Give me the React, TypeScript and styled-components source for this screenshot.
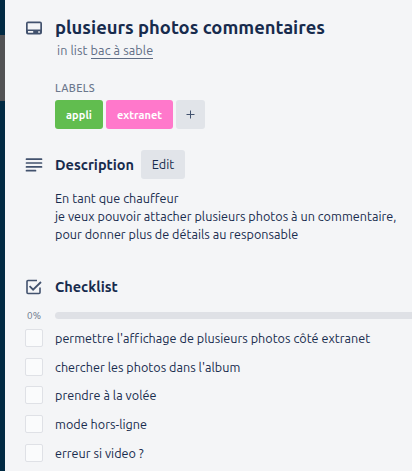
import React from 'react';
import styled, { createGlobalStyle } from 'styled-components';

const GlobalStyle = createGlobalStyle`
  * { box-sizing: border-box; }
  body {
    margin: 0;
    overflow: hidden;
    background: #f4f5f7;
    color: #172b4d;
    font-family: Ubuntu, "Noto Sans", "Open Sans", sans-serif;
    font-size: 12.6px;
  }
`;

const Page = styled.div`
  display: flex;
  width: 412px;
  height: 471px;
  overflow: hidden;
`;

const Backdrop = styled.div`
  flex: 0 0 5px;
  padding-top: 35px;
  background: #012a43;
`;

const BackdropList = styled.div`
  height: 66px;
  background: #525254;
`;

const Card = styled.main`
  flex: 1;
  min-width: 0;
  padding-left: 20px;
  background: #f4f5f7;
`;

const Row = styled.div<{ $height: number; $top?: number }>`
  display: flex;
  align-items: center;
  height: ${p => p.$height}px;
  margin-top: ${p => p.$top ?? 0}px;
`;

const Gutter = styled.div`
  display: flex;
  flex: 0 0 30px;
  color: #42526e;
  svg { display: block; }
`;

const Text = styled.span<{ $track?: number }>`
  white-space: nowrap;
  letter-spacing: ${p => p.$track ?? 0}px;
`;

const Title = styled.h1`
  margin: 0;
  padding-bottom: 2px;
  font-size: 18.4px;
  line-height: 24px;
  font-weight: 700;
`;

const Subtitle = styled.div`
  margin-left: 32px;
  height: 18px;
  color: #5e6c84;
  line-height: 18px;
`;

const ListLink = styled.a`
  display: inline-block;
  height: 18px;
  border-bottom: 1px solid #5e6c84;
`;

const LabelsHeading = styled.h3`
  margin: 20px 0 0 30px;
  height: 21px;
  color: #6b778c;
  font-size: 10.8px;
  font-weight: 500;
  line-height: 18px;
`;

const Labels = styled.div`
  display: flex;
  gap: 3px;
  margin: 0 0 0 30px;
`;

const Label = styled.div<{ $color: string; $width: number }>`
  display: flex;
  align-items: center;
  justify-content: center;
  width: ${p => p.$width}px;
  height: 29px;
  border-radius: 3px;
  background: ${p => p.$color};
  color: #fff;
  font-size: 11px;
  font-weight: 700;
`;

const Heading = styled.h2`
  margin: 0;
  font-size: 14.5px;
  line-height: 20px;
  font-weight: 700;
`;

const EditButton = styled.button`
  width: 44px;
  height: 29px;
  margin-left: auto;
  padding: 0 0 1px;
  border: 0;
  border-radius: 3px;
  background: #e1e4e9;
  color: #172b4d;
  font: inherit;
`;

const HeadingGroup = styled.div`
  display: flex;
  align-items: center;
  width: 130px;
`;

const Description = styled.div`
  display: flex;
  flex-direction: column;
  margin: 10px 0 0 30px;
  line-height: 18px;
`;

const Percent = styled.span`
  width: 18px;
  color: #6b778c;
  font-size: 9.9px;
  text-align: center;
`;

const Progress = styled.div`
  flex: 1;
  height: 7px;
  border-radius: 4px 0 0 4px;
  background: #dfe1e6;
`;

const Items = styled.div`
  display: flex;
  flex-direction: column;
  gap: 10.7px;
  margin-top: 10px;
`;

const Item = styled.label`
  display: flex;
  align-items: center;
  height: 18px;
`;

const Box = styled.span`
  width: 18px;
  height: 18px;
  margin-right: 12px;
  border: 1px solid #dfe1e6;
  border-radius: 2px;
  background: #fafbfc;
`;

const CardIcon = () => (
  <svg width="18" height="14" viewBox="0 0 18 14">
    <path
      fill="#42526e"
      fillRule="evenodd"
      d="M3 0.5h12a2 2 0 0 1 2 2v9a2 2 0 0 1-2 2H3a2 2 0 0 1-2-2v-9a2 2 0 0 1 2-2ZM2.7 2.2v6.2h12.6V2.2ZM3 10.1v1.7h5.2v-1.7ZM13.2 10.2v1.5h1.7v-1.5Z"
    />
  </svg>
);

const LinesIcon = () => (
  <svg width="18" height="14" viewBox="0 0 18 14" stroke="#42526e" strokeWidth="1.7" strokeLinecap="round">
    <path d="M1.5 1.2h15M1.5 5h15M1.5 8.9h15M1.5 12.7h9" />
  </svg>
);

const CheckIcon = () => (
  <svg width="18" height="16" viewBox="0 0 18 16" fill="none" stroke="#42526e" strokeWidth="1.6">
    <path d="M12 1.5H3A1 1 0 0 0 2 2.500V13.500a1 1 0 0 0 1 1h11a1 1 0 0 0 1-1V8.500" />
    <path d="M4.600 7.200l3.500 3.500L16 3" strokeWidth="1.8" />
  </svg>
);

const PlusIcon = () => (
  <svg width="9" height="9" viewBox="0 0 9 9" stroke="#42526e">
    <path d="M4.5 0.5v8M0.5 4.5h8" />
  </svg>
);

const description = [
  'En tant que chauffeur',
  'je veux pouvoir attacher plusieurs photos à un commentaire,',
  'pour donner plus de détails au responsable',
];

const checklist = [
  "permettre l'affichage de plusieurs photos côté extranet",
  "chercher les photos dans l'album",
  'prendre à la volée',
  'mode hors-ligne',
  'erreur si video ?',
];

export default function App() {
  return (
    <Page>
      <GlobalStyle />
      <Backdrop><BackdropList /></Backdrop>
      <Card>
        <Row $height={26} $top={15}>
          <Gutter><CardIcon /></Gutter>
          <Title><Text>plusieurs photos commentaires</Text></Title>
        </Row>
        <Subtitle>
          <Text $track={0.1}>in list <ListLink>bac à sable</ListLink></Text>
        </Subtitle>
        <LabelsHeading><Text $track={0.3}>LABELS</Text></LabelsHeading>
        <Labels>
          <Label $color="#61bd4f" $width={48}><Text $track={0.1}>appli</Text></Label>
          <Label $color="#ff78cb" $width={67}><Text>extranet</Text></Label>
          <Label $color="#e1e4e9" $width={29}><PlusIcon /></Label>
        </Labels>
        <Row $height={29} $top={21}>
          <Gutter><LinesIcon /></Gutter>
          <HeadingGroup>
            <Heading><Text>Description</Text></Heading>
            <EditButton type="button"><Text>Edit</Text></EditButton>
          </HeadingGroup>
        </Row>
        <Description>
          {description.map(line => <Text key={line} $track={0.02}>{line}</Text>)}
        </Description>
        <Row $height={20} $top={34}>
          <Gutter><CheckIcon /></Gutter>
          <Heading><Text>Checklist</Text></Heading>
        </Row>
        <Row $height={7} $top={15}>
          <Gutter><Percent>0%</Percent></Gutter>
          <Progress />
        </Row>
        <Items>
          {checklist.map(item => (
            <Item key={item}><Box /><Text $track={0.025}>{item}</Text></Item>
          ))}
        </Items>
      </Card>
    </Page>
  );
}
